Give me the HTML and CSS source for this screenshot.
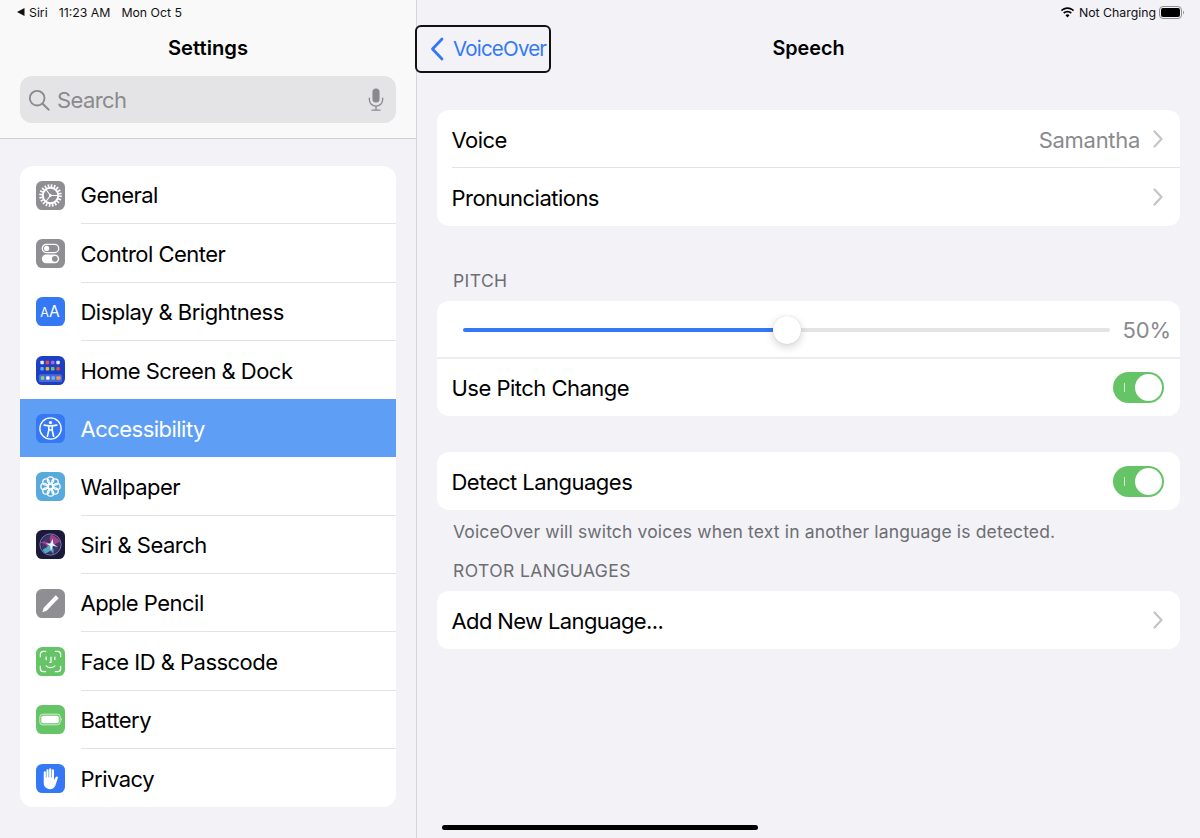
FILE: index.html
```html
<!DOCTYPE html>
<html lang="en">
<head>
<meta charset="utf-8">
<title>Speech</title>
<link rel="stylesheet" href="styles.css">
</head>
<body>
<div class="app">
  <aside class="sidebar">
    <header class="side-head">
      <div class="status status-left">
        <svg class="siri-arrow" viewBox="0 0 8 8"><path d="M7.500 0V8L0 4Z"/></svg>
        <span>Siri</span><span class="st-time">11:23 AM</span><span class="st-date">Mon Oct 5</span>
      </div>
      <h1 class="side-title">Settings</h1>
      <div class="search">
        <svg class="search-ic" viewBox="0 0 24 24"><circle cx="10" cy="10" r="8" fill="none" stroke="#8a8a8e" stroke-width="2"/><path d="M16 16l6.500 6.500" stroke="#8a8a8e" stroke-width="2.200" stroke-linecap="round"/></svg>
        <span class="search-text">Search</span>
        <svg class="mic-ic" viewBox="0 0 18 26"><rect x="5" y="0.500" width="8" height="16" rx="4" fill="#8a8a8e"/><path d="M1.500 11.500v1.500a7.500 7.500 0 0 0 15 0v-1.500M9 20.500v4M4.500 25h9" fill="none" stroke="#8a8a8e" stroke-width="1.500" stroke-linecap="round"/></svg>
      </div>
    </header>
    <div class="side-scroll">
      <nav class="menu">
        <div class="item">
          <svg class="ico" viewBox="0 0 30 30"><rect width="30" height="30" rx="6.500" fill="#8e8e93"/><circle cx="15" cy="15" r="10.200" fill="none" stroke="#fff" stroke-width="3" stroke-dasharray="1.700 1.500"/><circle cx="15" cy="15" r="8" fill="none" stroke="#fff" stroke-width="2"/><circle cx="15" cy="15" r="1.500" fill="#fff"/><path d="M15 15H22.500M15 15l-4.500-6M15 15l-4.500 6" stroke="#fff" stroke-width="1.100"/></svg>
          <span class="label">General</span>
        </div>
        <div class="item">
          <svg class="ico" viewBox="0 0 30 30"><rect width="30" height="30" rx="6.500" fill="#8e8e93"/><rect x="6.500" y="5.500" width="17" height="8.500" rx="4.250" fill="none" stroke="#fff" stroke-width="1.300"/><circle cx="11" cy="9.750" r="2.700" fill="#fff"/><rect x="6" y="16" width="18" height="9" rx="4.500" fill="#fff"/><circle cx="19.500" cy="20.500" r="3" fill="#8e8e93"/></svg>
          <span class="label">Control Center</span>
        </div>
        <div class="item">
          <svg class="ico" viewBox="0 0 30 30"><rect width="30" height="30" rx="6.500" fill="#3478f6"/><text class="aa-small" x="4.500" y="21">A</text><text class="aa-big" x="13.500" y="21">A</text></svg>
          <span class="label">Display &amp; Brightness</span>
        </div>
        <div class="item">
          <svg class="ico" viewBox="0 0 30 30"><rect width="30" height="30" rx="6.500" fill="#1c3fc4"/><rect x="4.500" y="5" width="3.600" height="3.600" rx=".8" fill="#e8ecf5"/><rect x="10" y="5" width="3.600" height="3.600" rx=".8" fill="#ec4d4d"/><rect x="15.500" y="5" width="3.600" height="3.600" rx=".8" fill="#a264ec"/><rect x="21" y="5" width="3.600" height="3.600" rx=".8" fill="#e8ecf5"/><rect x="4.500" y="11.500" width="3.600" height="3.600" rx=".8" fill="#55b0f0"/><rect x="10" y="11.500" width="3.600" height="3.600" rx=".8" fill="#f3b23c"/><rect x="15.500" y="11.500" width="3.600" height="3.600" rx=".8" fill="#5ecb6c"/><rect x="21" y="11.500" width="3.600" height="3.600" rx=".8" fill="#ec4d3d"/><rect x="3" y="19" width="24" height="8" rx="2" fill="#4a68d8"/><rect x="5" y="21" width="3.600" height="3.600" rx=".8" fill="#7fd47a"/><rect x="10.500" y="21" width="3.600" height="3.600" rx=".8" fill="#f2f2f7"/><rect x="16" y="21" width="3.600" height="3.600" rx=".8" fill="#62b6f4"/><rect x="21" y="21" width="4.500" height="3.600" rx=".8" fill="#eb9a4a"/></svg>
          <span class="label">Home Screen &amp; Dock</span>
        </div>
        <div class="item selected">
          <svg class="ico" viewBox="0 0 30 30"><rect width="30" height="30" rx="6.500" fill="#3478f6"/><circle cx="15" cy="15" r="11" fill="none" stroke="#fff" stroke-width="1.400"/><circle cx="15" cy="8.900" r="1.700" fill="#fff"/><path d="M8.500 11.500c4 1 9 1 13 0M13.200 12.500v4.500l-1.400 6M16.800 12.500v4.500l1.400 6M13.200 16.500h3.600" fill="none" stroke="#fff" stroke-width="1.700" stroke-linecap="round"/></svg>
          <span class="label">Accessibility</span>
        </div>
        <div class="item">
          <svg class="ico" viewBox="0 0 30 30"><rect width="30" height="30" rx="6.500" fill="#58a9dc"/><g fill="none" stroke="#fff" stroke-width="1.300"><circle cx="15" cy="15" r="2.400"/><circle cx="15" cy="8.300" r="3.300"/><circle cx="15" cy="21.700" r="3.300"/><circle cx="8.300" cy="15" r="3.300"/><circle cx="21.700" cy="15" r="3.300"/><circle cx="10.300" cy="10.300" r="3.300"/><circle cx="19.700" cy="10.300" r="3.300"/><circle cx="10.300" cy="19.700" r="3.300"/><circle cx="19.700" cy="19.700" r="3.300"/></g></svg>
          <span class="label">Wallpaper</span>
        </div>
        <div class="item">
          <svg class="ico" viewBox="0 0 30 30"><defs><radialGradient id="siri" cx=".5" cy=".5" r=".5"><stop offset="0" stop-color="#2c2c58"/><stop offset=".7" stop-color="#40376f"/><stop offset="1" stop-color="#25254f"/></radialGradient></defs><rect width="30" height="30" rx="6.500" fill="#1b1a3c"/><circle cx="15" cy="15" r="11" fill="url(#siri)" stroke="#7b80a0" stroke-width="1"/><path d="M4.500 13c4 1 6 2 10.500 8 3-6 6-7 10.500-9-4-4-7-7-10.500-7-1 4-1 6 0 10-3-3-6-4-10.500-2Z" fill="#c0479a" opacity=".75"/><path d="M7 20c3-1 5-2 8-7 2 3 4 7 3 12-2-3-3-4-3-4-2 2-4 3-5 3-2-1-3-2-3-4Z" fill="#58c6d8" opacity=".8"/><path d="M15 14l2.200-5 .8 5.500 4.500 3-5.200-1.300-2 6-.6-6-4.500-2.200Z" fill="#eef6fb"/></svg>
          <span class="label">Siri &amp; Search</span>
        </div>
        <div class="item">
          <svg class="ico" viewBox="0 0 30 30"><rect width="30" height="30" rx="6.500" fill="#8e8e93"/><path d="M20.500 6.500l3 3-12.500 13-4.500 1.500 1.500-4.500Z" fill="#fff"/></svg>
          <span class="label">Apple Pencil</span>
        </div>
        <div class="item">
          <svg class="ico" viewBox="0 0 30 30"><rect width="30" height="30" rx="6.500" fill="#65c466"/><path d="M4.500 10V7.500a3 3 0 0 1 3-3H10M20 4.500h2.500a3 3 0 0 1 3 3V10M25.500 20v2.500a3 3 0 0 1-3 3H20M10 25.500H7.500a3 3 0 0 1-3-3V20M10.500 10.500v2.500M19.500 10.500v2.500M15.500 10.500v5.500h-1.200M10.500 19.500c2.500 2.400 6.500 2.400 9 0" fill="none" stroke="#fff" stroke-width="1.300" stroke-linecap="round"/></svg>
          <span class="label">Face ID &amp; Passcode</span>
        </div>
        <div class="item">
          <svg class="ico" viewBox="0 0 30 30"><rect width="30" height="30" rx="6.500" fill="#65c466"/><rect x="4" y="9.500" width="21" height="11" rx="2.800" fill="none" stroke="#d6f0d6" stroke-width="1"/><rect x="5.500" y="11" width="18" height="8" rx="1.600" fill="#fff"/><path d="M26 13.500c1 .5 1 2.500 0 3Z" fill="#d6f0d6"/></svg>
          <span class="label">Battery</span>
        </div>
        <div class="item">
          <svg class="ico" viewBox="0 0 30 30"><rect width="30" height="30" rx="6.500" fill="#3478f6"/><path d="M8 8.500a1.100 1.100 0 0 1 2.200 0V14h.6V6.500a1.100 1.100 0 0 1 2.200 0V14h.6V5.500a1.100 1.100 0 0 1 2.200 0V14h.6V6.500a1.100 1.100 0 0 1 2.200 0V16.500l1.800-3a1.200 1.200 0 0 1 2.100 1.200L20 22.500c-1 2-2.800 3.500-5.500 3.500C10.500 26 8 23.500 8 19.500Z" fill="#fff"/></svg>
          <span class="label">Privacy</span>
        </div>
      </nav>
    </div>
  </aside>
  <main class="detail">
    <div class="status status-right">
      <svg class="wifi" viewBox="0 0 16 12"><path d="M8 2.200c2.400 0 4.500 1 6 2.500l1.200-1.300C13.300 1.500 10.800.3 8 .3S2.700 1.500.8 3.400L2 4.700c1.500-1.500 3.600-2.500 6-2.500ZM8 5.900c1.400 0 2.600.6 3.500 1.400l1.200-1.300C11.500 4.800 9.800 4 8 4s-3.500.8-4.700 2l1.200 1.300C5.400 6.500 6.600 5.900 8 5.900ZM8 8c-.9 0-1.600.4-2.200.9L8 11.500l2.200-2.600C9.600 8.400 8.900 8 8 8Z"/></svg>
      <span class="charging">Not Charging</span>
      <svg class="batt" viewBox="0 0 26 13"><rect x=".5" y=".5" width="22" height="12" rx="3.500" fill="none" stroke="#8e8e93"/><rect x="2" y="2" width="19" height="9" rx="2" fill="#000"/><path d="M24 4.500c1.200.4 1.200 3.600 0 4Z" fill="#8e8e93"/></svg>
    </div>
    <header class="nav">
      <div class="back">
        <svg class="chev-back" viewBox="0 0 14 24"><path d="M12 2L2.500 12 12 22" fill="none" stroke="#3478f6" stroke-width="2.800" stroke-linecap="round" stroke-linejoin="round"/></svg>
        <span class="back-text">VoiceOver</span>
      </div>
      <h2 class="nav-title">Speech</h2>
    </header>
    <section class="card first">
      <div class="row">
        <span class="row-label">Voice</span>
        <span class="row-value">Samantha</span>
        <svg class="chev" viewBox="0 0 10 18"><path d="M1.500 1.500L8.500 9l-7 7.500" fill="none" stroke="#c4c4c7" stroke-width="2.200" stroke-linecap="round" stroke-linejoin="round"/></svg>
      </div>
      <div class="row sep">
        <span class="row-label">Pronunciations</span>
        <svg class="chev" viewBox="0 0 10 18"><path d="M1.500 1.500L8.500 9l-7 7.500" fill="none" stroke="#c4c4c7" stroke-width="2.200" stroke-linecap="round" stroke-linejoin="round"/></svg>
      </div>
    </section>
    <p class="section-head pitch-head">PITCH</p>
    <section class="card">
      <div class="slider-row">
        <div class="slider">
          <div class="track-on"></div>
          <div class="thumb"></div>
          <div class="track-off"></div>
        </div>
        <span class="row-value pct">50%</span>
      </div>
      <div class="row sep-full">
        <span class="row-label">Use Pitch Change</span>
        <span class="toggle"><i class="toggle-mark"></i><i class="toggle-knob"></i></span>
      </div>
    </section>
    <section class="card detect">
      <div class="row">
        <span class="row-label">Detect Languages</span>
        <span class="toggle"><i class="toggle-mark"></i><i class="toggle-knob"></i></span>
      </div>
    </section>
    <p class="footnote">VoiceOver will switch voices when text in another language is detected.</p>
    <p class="section-head rotor-head">ROTOR LANGUAGES</p>
    <section class="card">
      <div class="row">
        <span class="row-label tight">Add New Language...</span>
        <svg class="chev" viewBox="0 0 10 18"><path d="M1.500 1.500L8.500 9l-7 7.500" fill="none" stroke="#c4c4c7" stroke-width="2.200" stroke-linecap="round" stroke-linejoin="round"/></svg>
      </div>
    </section>
  </main>
</div>
<div class="home-bar"></div>
</body>
</html>
```
FILE: styles.css
```css
* { box-sizing: border-box; }
html, body { margin: 0; padding: 0; }
body {
  width: 1200px;
  height: 838px;
  overflow: hidden;
  position: relative;
  background: #f2f2f7;
  font-family: Inter, "Liberation Sans", sans-serif;
  color: #000;
}
.app { display: flex; height: 838px; }

/* Sidebar */
.sidebar {
  width: 417px;
  flex: none;
  border-right: 1px solid #d6d6da;
  display: flex;
  flex-direction: column;
}
.side-head {
  height: 139px;
  background: #f9f9f9;
  border-bottom: 1px solid #cfcfd2;
  padding: 0 20px;
}
.status {
  height: 24px;
  display: flex;
  align-items: center;
  font-size: 12.3px;
  color: #111;
}
.status-left { margin-left: -3px; }
.siri-arrow { width: 8px; height: 8px; margin-right: 4px; fill: #111; }
.st-time { margin-left: 11px; }
.st-date { margin-left: 11px; }
.side-title {
  margin: 0;
  height: 48px;
  line-height: 48px;
  text-align: center;
  font-size: 20.2px;
  font-weight: 600;
}
.search {
  height: 47px;
  margin-top: 4px;
  background: #e4e4e6;
  border-radius: 12px;
  display: flex;
  align-items: center;
  padding: 0 12px 0 8px;
}
.search-ic { width: 22px; height: 22px; flex: none; }
.search-text { margin-left: 7px; font-size: 22px; letter-spacing: -0.6px; color: #8a8a8e; flex: 1; }
.mic-ic { width: 16px; height: 25px; flex: none; }
.side-scroll { padding: 27px 20px 0; flex: 1; }
.menu { background: #fff; border-radius: 13px; overflow: hidden; height: 641px; }
.item {
  height: 58.3px;
  display: flex;
  align-items: center;
  padding-left: 16px;
  position: relative;
}
.ico { width: 29px; height: 29px; flex: none; }
.aa-small { font-size: 13px; fill: #fff; font-family: Inter, "Liberation Sans", sans-serif; }
.aa-big { font-size: 16px; fill: #fff; font-family: Inter, "Liberation Sans", sans-serif; }
.label {
  margin-left: 15.5px;
  flex: 1;
  height: 100%;
  display: flex;
  align-items: center;
  font-size: 22px;
  letter-spacing: -0.52px;
  border-bottom: 1px solid #e3e3e5;
  padding-top: 1.5px;
}
.item:last-child .label, .item:nth-child(4) .label { border-bottom: none; }
.selected { background: #5e9ef5; color: #fff; }
.selected .label { border-bottom: none; }

/* Detail */
.detail { flex: 1; padding: 0 20px; min-width: 0; }
.status-right {
  height: 24px;
  justify-content: flex-end;
  margin-right: -5px;
}
.wifi { width: 15px; height: 11px; fill: #000; margin-right: 4px; }
.charging { margin-right: 3px; }
.batt { width: 26px; height: 13px; }
.nav {
  height: 48px;
  display: flex;
  align-items: center;
  justify-content: center;
  position: relative;
}
.back {
  position: absolute;
  left: -22px;
  top: 1px;
  width: 136px;
  height: 48px;
  border: 2px solid #111;
  border-radius: 6px;
  display: flex;
  align-items: center;
  padding-left: 13px;
  color: #3478f6;
  font-size: 20.5px;
  letter-spacing: -0.8px;
}
.back-text { padding-bottom: 2px; }
.chev-back { width: 14px; height: 24px; margin-right: 9px; flex: none; }
.nav-title { margin: 0; font-size: 19.8px; font-weight: 600; }
.card {
  background: #fff;
  border-radius: 12px;
  overflow: hidden;
}
.first { margin-top: 38px; }
.row {
  height: 58px;
  display: flex;
  align-items: center;
  padding: 0 16px 0 14.5px;
  position: relative;
}
.sep::before {
  content: "";
  position: absolute;
  left: 15px;
  right: 0;
  top: -1px;
  border-top: 1px solid #e3e3e5;
}
.sep-full { border-top: 2px solid #ececee; height: 59px; }
.sep-full .row-label { padding-top: 0; }
.row-label { flex: 1; font-size: 22px; letter-spacing: -0.52px; padding-top: 2px; }
.tight { letter-spacing: -0.62px; }
.row-value { color: #8a8a8e; font-size: 22px; letter-spacing: -0.3px; padding-top: 2px; }
.chev { width: 10px; height: 18px; margin-left: 13px; margin-right: 1px; flex: none; }
.section-head {
  margin: 0;
  font-size: 17.5px;
  letter-spacing: 0.42px;
  color: #6d6d72;
  padding-left: 16px;
  line-height: 22px;
}
.pitch-head { margin-top: 44px; margin-bottom: 9px; }
.slider-row {
  height: 56px;
  display: flex;
  align-items: center;
  padding: 2px 9px 0 26px;
}
.slider { flex: 1; display: flex; align-items: center; }
.track-on { width: 310px; height: 4px; background: #3478f6; border-radius: 2px 0 0 2px; }
.thumb {
  width: 28px;
  height: 28px;
  border-radius: 50%;
  background: #fff;
  flex: none;
  box-shadow: 0 3px 8px rgba(0,0,0,.18), 0 0 1px rgba(0,0,0,.2);
  position: relative;
}
.track-off { flex: 1; height: 4px; background: #e4e4e6; border-radius: 0 2px 2px 0; }
.pct { margin-left: 12px; padding-top: 0; letter-spacing: -0.1px; }
.toggle {
  width: 51px;
  height: 31px;
  background: #65c466;
  border-radius: 16px;
  position: relative;
  flex: none;
}
.toggle-mark {
  position: absolute;
  left: 11px;
  top: 11px;
  width: 1px;
  height: 9px;
  background: #d5efd5;
}
.toggle-knob {
  position: absolute;
  right: 2px;
  top: 2px;
  width: 27px;
  height: 27px;
  border-radius: 50%;
  background: #fff;
}
.detect { margin-top: 36px; }
.footnote {
  margin: 11px 0 0;
  padding-left: 16px;
  font-size: 17.5px;
  letter-spacing: 0.15px;
  line-height: 22px;
  color: #6d6d72;
}
.rotor-head { margin-top: 17px; margin-bottom: 9px; }

.home-bar {
  position: absolute;
  left: 442px;
  top: 825px;
  width: 316px;
  height: 5px;
  border-radius: 3px;
  background: #000;
}
```
